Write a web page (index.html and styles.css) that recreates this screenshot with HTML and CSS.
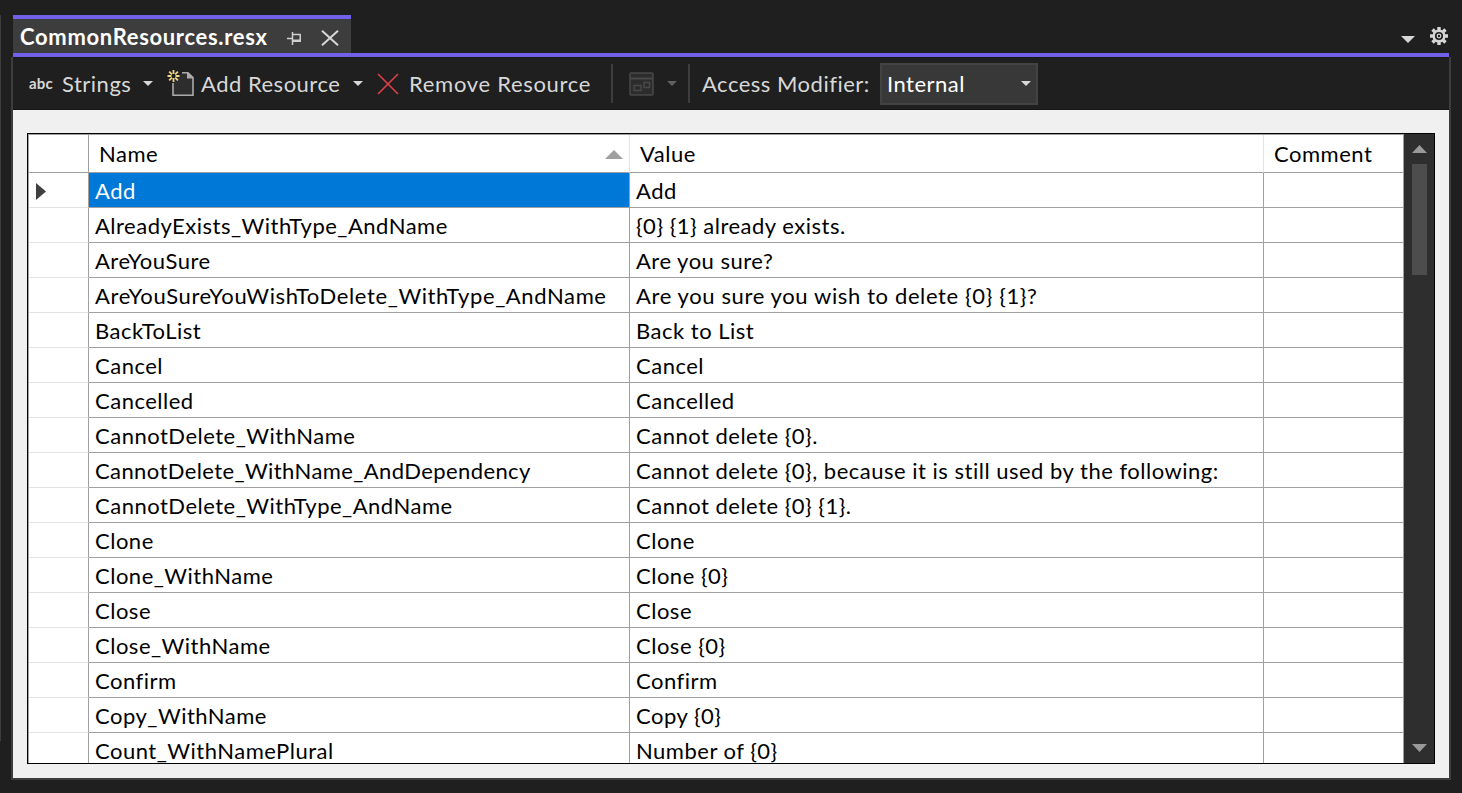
FILE: index.html
```
<!DOCTYPE html>
<html lang="en">
<head>
<meta charset="utf-8">
<title>CommonResources.resx</title>
<link rel="stylesheet" href="styles.css">
</head>
<body>
<div class="dock-edge"></div>
<div class="window">
  <header class="tabs">
    <div class="tab">
      <span class="tab-title">CommonResources.resx</span>
      <svg class="pin" width="15" height="13" viewBox="0 0 15 13"><path d="M0 6.500h5M5.500 0v13M5.500 2.500h7.700v7M5.500 9h8.500" fill="none" stroke="#d0d0d0" stroke-width="1.500"/><path d="M6 7.500h8V10H6z" fill="#d0d0d0"/></svg>
      <svg class="close" width="18" height="16" viewBox="0 0 18 16"><path d="M1 .8l16 14.400M17 .8L1 15.200" stroke="#d8d8d8" stroke-width="2"/></svg>
    </div>
    <div class="tab-tools">
      <svg width="14" height="7" viewBox="0 0 14 7"><path d="M0 0h14L7 7z" fill="#d6d6d6"/></svg>
      <svg class="gear" width="18" height="18" viewBox="-9 -9 18 18"><g fill="none" stroke="#d6d6d6"><circle r="5.300" stroke-width="2.500"/><circle r="1.800" stroke-width="1.200"/><path stroke-width="3.400" d="M0-6v-3M0 6v3M-6 0h-3M6 0h3M-4.200-4.200l-2.300-2.300M4.200-4.200l2.300-2.300M-4.200 4.200l-2.300 2.300M4.200 4.200l2.300 2.300"/></g></svg>
    </div>
  </header>
  <main class="pane">
    <nav class="toolbar">
      <span class="abc">abc</span>
      <span class="label strings">Strings</span>
      <svg class="drop drop-strings" width="10" height="5" viewBox="0 0 10 5"><path d="M0 0h10L5 5z"/></svg>
      <svg class="new-file" width="28" height="29" viewBox="0 0 28 29"><path d="M15 3.700h6l5 5v17.600H6V14" fill="#2d2d2d" stroke="#ababab" stroke-width="1.600"/><path d="M20 3l6.500 6.500H20z" fill="#ababab"/><path d="M6.500 1v4M6.500 9v4M.5 7h4M8.500 7h4M2.200 2.700l2.700 2.700M8.200 8.700l2.700 2.700M10.900 2.700L8.200 5.400M4.900 8.700l-2.700 2.700" stroke="#f0d486" stroke-width="1.800"/></svg>
      <span class="label add">Add Resource</span>
      <svg class="drop drop-add" width="10" height="5" viewBox="0 0 10 5"><path d="M0 0h10L5 5z"/></svg>
      <svg class="remove-icon" width="22" height="22" viewBox="0 0 22 22"><path d="M1 1l20 20M21 1L1 21" stroke="#dc3e4c" stroke-width="1.700"/></svg>
      <span class="label remove">Remove Resource</span>
      <i class="divider"></i>
      <svg class="form-icon" width="25" height="24" viewBox="0 0 25 24"><g fill="#2c2c2c" stroke="#484848" stroke-width="1.500"><rect x="1" y="1" width="23" height="22" rx="1"/><path d="M1 6.500h23" fill="none" stroke-width="2"/><rect x="5" y="13.500" width="7" height="5"/><rect x="15" y="10.500" width="5.500" height="5"/></g></svg>
      <svg class="drop drop-off" width="10" height="5" viewBox="0 0 10 5"><path d="M0 0h10L5 5z"/></svg>
      <i class="divider"></i>
      <span class="label access">Access Modifier:</span>
      <div class="select"><span>Internal</span><svg class="drop" width="10" height="5" viewBox="0 0 10 5"><path d="M0 0h10L5 5z"/></svg></div>
    </nav>
    <section class="content">
      <div class="grid-box">
        <div class="grid">
          <div class="row head"><b></b><span>Name<svg width="18" height="9" viewBox="0 0 18 9"><path d="M0 9h18L9 0z" fill="#a0a0a0"/></svg></span><span>Value</span><span>Comment</span></div>
          <div class="row selected"><b><svg width="10" height="17" viewBox="0 0 10 17"><path d="M0 0v17l10-8.500z" fill="#404040"/></svg></b><span>Add</span><span>Add</span><span></span></div>
          <div class="row"><b></b><span>AlreadyExists_WithType_AndName</span><span>{0} {1} already exists.</span><span></span></div>
          <div class="row"><b></b><span>AreYouSure</span><span>Are you sure?</span><span></span></div>
          <div class="row"><b></b><span class="long">AreYouSureYouWishToDelete_WithType_AndName</span><span class="long">Are you sure you wish to delete {0} {1}?</span><span></span></div>
          <div class="row"><b></b><span>BackToList</span><span>Back to List</span><span></span></div>
          <div class="row"><b></b><span>Cancel</span><span>Cancel</span><span></span></div>
          <div class="row"><b></b><span>Cancelled</span><span>Cancelled</span><span></span></div>
          <div class="row"><b></b><span>CannotDelete_WithName</span><span>Cannot delete {0}.</span><span></span></div>
          <div class="row"><b></b><span class="tight">CannotDelete_WithName_AndDependency</span><span>Cannot delete {0}, because it is still used by the following:</span><span></span></div>
          <div class="row"><b></b><span>CannotDelete_WithType_AndName</span><span>Cannot delete {0} {1}.</span><span></span></div>
          <div class="row"><b></b><span>Clone</span><span>Clone</span><span></span></div>
          <div class="row"><b></b><span>Clone_WithName</span><span>Clone {0}</span><span></span></div>
          <div class="row"><b></b><span>Close</span><span>Close</span><span></span></div>
          <div class="row"><b></b><span>Close_WithName</span><span>Close {0}</span><span></span></div>
          <div class="row"><b></b><span>Confirm</span><span>Confirm</span><span></span></div>
          <div class="row"><b></b><span>Copy_WithName</span><span>Copy {0}</span><span></span></div>
          <div class="row"><b></b><span>Count_WithNamePlural</span><span>Number of {0}</span><span></span></div>
        </div>
        <div class="scrollbar">
          <svg width="15" height="8" viewBox="0 0 16 8" preserveAspectRatio="none"><path d="M0 8h16L8 0z" fill="#999"/></svg>
          <div class="thumb"></div>
          <svg class="down" width="15" height="8" viewBox="0 0 16 8" preserveAspectRatio="none"><path d="M0 0h16L8 8z" fill="#999"/></svg>
        </div>
      </div>
    </section>
  </main>
</div>
</body>
</html>
```
FILE: styles.css
```
* { box-sizing: border-box; }
body { margin: 0; width: 1462px; height: 793px; overflow: hidden; background: #1f1f1f; font: 22px/36px Lato, "Open Sans", sans-serif; letter-spacing: .5px; color: #000; display: flex; }
svg { display: block; flex: none; }
.dock-edge { width: 1px; height: 726px; margin-top: 15px; background: #3d3d3d; }
.window { width: 1450px; margin-left: 10px; padding-top: 15px; }
.tabs { display: flex; justify-content: space-between; height: 42px; width: 1436px; margin-left: 2px; border-bottom: 4px solid #7160e8; }
.tab { width: 338px; border-top: 4px solid #7160e8; background: #3d3d3d; display: flex; padding-left: 7px; }
.tab-title { width: 267px; color: #fff; font-weight: 700; line-height: 36px; letter-spacing: .67px; white-space: nowrap; }
.pin { margin: 13px 0 0 0; }
.close { margin: 11px 0 0 19px; }
.tab-tools { display: flex; padding: 12px 1px 0 0; }
.tab-tools svg:first-child { margin: 9px 15px 0 0; }
.pane { width: 1440px; height: 723px; border: 2px solid #3d3d3d; border-top: 0; }
.toolbar { height: 53px; border-top: 1px solid #191919; border-bottom: 1px solid #151515; background: #1f1f1f; color: #d8d8d8; display: flex; align-items: center; padding-left: 16px; }
.label { white-space: nowrap; line-height: 53px; flex: none; }
.abc { width: 33px; font-size: 15px; font-weight: 700; line-height: 49px; letter-spacing: .2px; }
.strings { width: 81px; }
.drop { fill: #d8d8d8; }
.new-file { margin-left: 14px; }
.add { width: 152px; margin-left: 6px; }
.remove-icon { margin-left: 14px; }
.remove { width: 202px; margin-left: 10px; letter-spacing: .7px; }
.divider { width: 2px; height: 39px; background: #3d3d3d; flex: none; }
.form-icon { margin-left: 16px; }
.drop-off { fill: #606060; margin: 0 11px 0 13px; }
.access { width: 178px; margin-left: 12px; }
.select { width: 158px; height: 42px; border: 2px solid #434343; background: #383838; color: #fff; display: flex; justify-content: space-between; align-items: center; padding: 0 5px; }
.content { background: #f0f0f0; height: 668px; padding: 23px 14px; }
.grid-box { width: 1408px; height: 631px; border: 1px solid #000; display: flex; background: #fff; overflow: hidden; }
.grid { width: 1376px; border-top: 1px solid #a0a0a0; border-left: 1px solid #a0a0a0; }
.row { display: grid; grid-template-columns: 60px 541px 634px 140px; height: 35px; }
.row > * { height: 35px; border-right: 1px solid #a0a0a0; border-bottom: 1px solid #a0a0a0; white-space: nowrap; }
.row > span { padding-left: 6px; }
.row > .long { letter-spacing: .62px; }
.row > .tight { letter-spacing: .4px; }
.row > b { border-bottom-color: #e3e3e3; padding: 10px 0 0 7px; }
.head, .head > * { height: 38px; line-height: 38px; }
.head > b { border-bottom-color: #a0a0a0; }
.head > span { padding-left: 10px; border-right-color: #e3e3e3; }
.head > span:nth-child(2) { display: flex; justify-content: space-between; padding-right: 6px; }
.head > span:last-child { border-right-color: #a0a0a0; }
.head svg { margin-top: 15px; }
.selected > span:nth-child(2) { background: #0078d7; color: #fff; }
.scrollbar { width: 30px; background: #2e2e2e; display: flex; flex-direction: column; align-items: flex-start; padding: 11px 0 11px 8px; }
.thumb { width: 15px; height: 111px; margin-top: 11px; background: #4d4d4d; }
.down { margin-top: auto; }
```
